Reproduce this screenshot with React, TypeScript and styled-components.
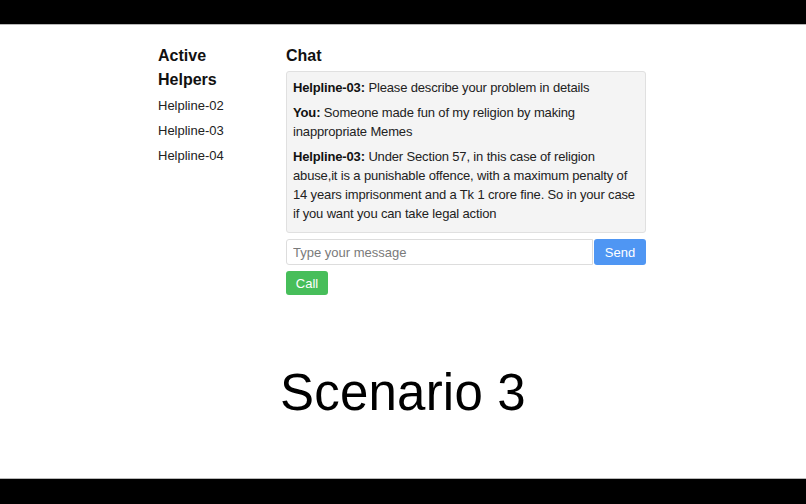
import React from "react";
import styled, { createGlobalStyle } from "styled-components";

const GlobalStyle = createGlobalStyle`
  html, body {
    margin: 0;
    padding: 0;
    background: #000;
  }
  body {
    font-family: "Liberation Sans", Arial, Helvetica, sans-serif;
    color: #111;
  }
`;

const Screen = styled.div`
  width: 806px;
  height: 504px;
  display: flex;
  flex-direction: column;
  background: #000;
`;

const Letterbox = styled.div<{ $h: number }>`
  height: ${(p) => p.$h}px;
  flex: none;
  background: #000;
`;

const Stage = styled.div`
  flex: 1;
  background: #fff;
  display: flex;
  flex-direction: column;
  align-items: center;
  border-top: 1px solid #b8b8b8;
  border-bottom: 1px solid #b8b8b8;
`;

const Layout = styled.div`
  width: 488px;
  margin-left: -2px;
  padding-top: 19px;
  display: grid;
  grid-template-columns: 128px 360px;
`;

const Heading = styled.h3`
  margin: 0 0 1px;
  font-size: 16px;
  font-weight: 700;
  line-height: 24px;
  color: #111;
`;

const HelperList = styled.ul`
  list-style: none;
  margin: 0;
  padding: 0;
`;

const Helper = styled.li`
  font-size: 13px;
  line-height: 25px;
  color: #222;
`;

const ChatBox = styled.div`
  background: #f4f4f4;
  border: 1px solid #e0e0e0;
  border-radius: 3px;
  padding: 6px 6px 3px;
  margin-top: 3px;
`;

const Message = styled.p`
  margin: 0 0 6px;
  font-size: 13px;
  line-height: 19px;
  letter-spacing: -0.15px;
  color: #222;

  b {
    font-weight: 700;
    color: #111;
  }
`;

const InputRow = styled.div`
  display: flex;
  margin-top: 6px;
  height: 26px;
`;

const TextInput = styled.input`
  flex: 1;
  min-width: 0;
  border: 1px solid #ddd;
  border-radius: 3px 0 0 3px;
  padding: 0 6px;
  font-family: "Liberation Sans", Arial, sans-serif;
  font-size: 13px;
  color: #222;
  background: #fff;
  outline: none;

  &::placeholder {
    color: #7a7a7a;
  }
`;

const Button = styled.button<{ $color: string }>`
  border: none;
  border-radius: 3px;
  background: ${(p) => p.$color};
  color: #fff;
  font-family: "Liberation Sans", Arial, sans-serif;
  font-size: 13px;
  padding: 0 10px;
  cursor: pointer;
`;

const SendButton = styled(Button)`
  width: 52px;
  margin-left: 1px;
`;

const CallButton = styled(Button)`
  display: block;
  margin-top: 6px;
  width: 42px;
  height: 24px;
  padding: 0;
`;

const Caption = styled.div`
  margin-top: 68px;
  font-size: 51px;
  line-height: 60px;
  color: #000;
  letter-spacing: 0.2px;
`;

const helpers = ["Helpline-02", "Helpline-03", "Helpline-04"];

const messages = [
  { from: "Helpline-03", text: "Please describe your problem in details" },
  { from: "You", text: "Someone made fun of my religion by making inappropriate Memes" },
  {
    from: "Helpline-03",
    text:
      "Under Section 57, in this case of religion abuse,it is a punishable offence, with a maximum penalty of 14 years imprisonment and a Tk 1 crore fine. So in your case if you want you can take legal action",
  },
];

export default function App() {
  return (
    <Screen>
      <GlobalStyle />
      <Letterbox $h={24} />
      <Stage>
        <Layout>
          <div>
            <Heading>
              Active
              <br />
              Helpers
            </Heading>
            <HelperList>
              {helpers.map((h) => (
                <Helper key={h}>{h}</Helper>
              ))}
            </HelperList>
          </div>
          <div>
            <Heading>Chat</Heading>
            <ChatBox>
              {messages.map((m, i) => (
                <Message key={i}>
                  <b>{m.from}:</b> {m.text}
                </Message>
              ))}
            </ChatBox>
            <InputRow>
              <TextInput placeholder="Type your message" />
              <SendButton $color="#4f96f3">Send</SendButton>
            </InputRow>
            <CallButton $color="#47be5a">Call</CallButton>
          </div>
        </Layout>
        <Caption>Scenario 3</Caption>
      </Stage>
      <Letterbox $h={25} />
    </Screen>
  );
}
